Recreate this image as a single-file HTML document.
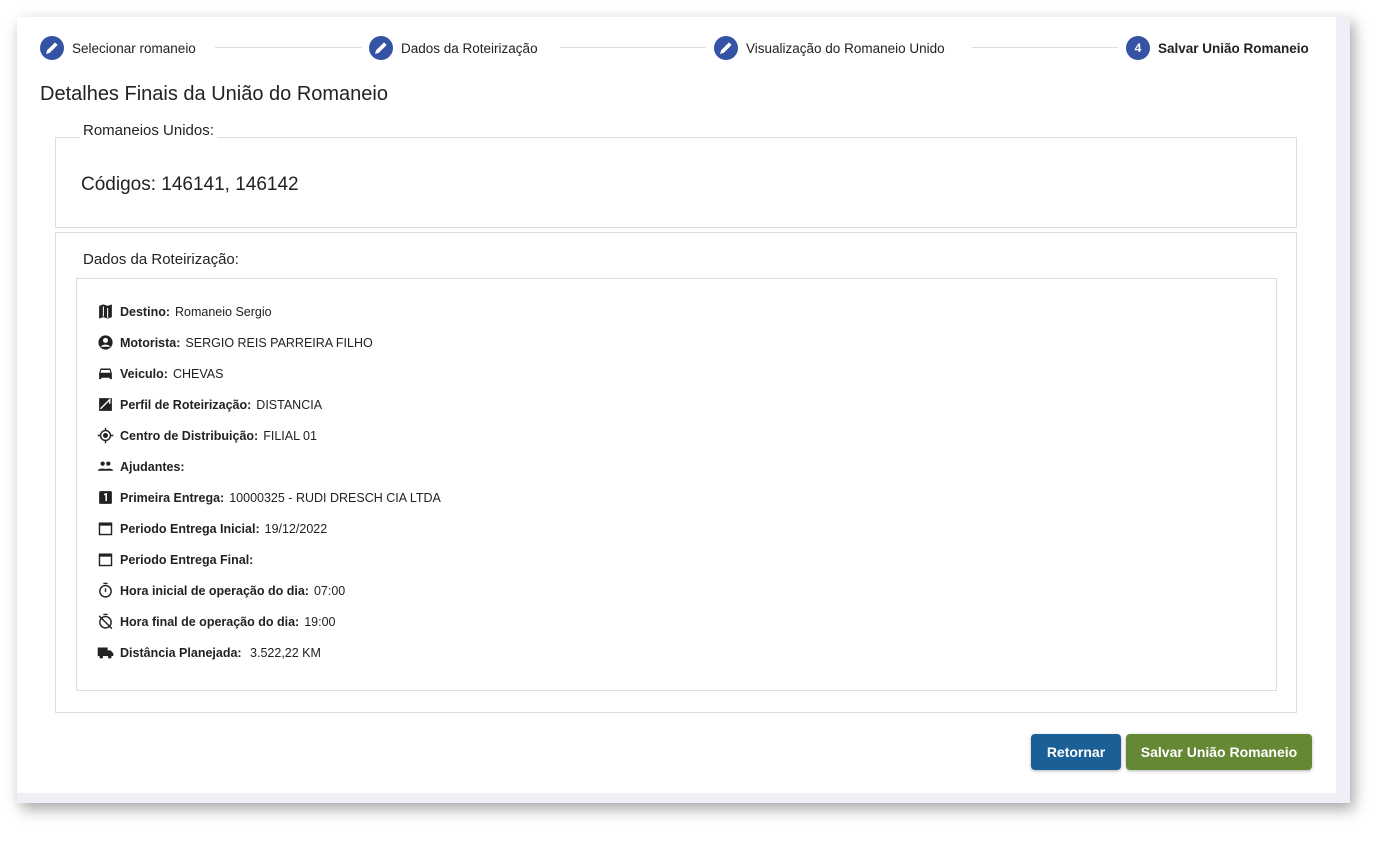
<!DOCTYPE html>
<html><head><meta charset="utf-8"><style>
body{margin:0;width:1398px;height:852px;background:#fff;font-family:"Liberation Sans",sans-serif;color:#222;position:relative;overflow:hidden}
.win{position:absolute;left:17px;top:17px;width:1333px;height:786px;background:#eef0f6;box-shadow:4px 6px 14px rgba(0,0,0,.35)}
.inner{position:absolute;left:0;top:0;width:1319px;height:776px;background:#fff}
.step{position:absolute;top:36px;display:flex;align-items:center;font-size:13.5px;color:#222}
.c{width:24px;height:24px;border-radius:50%;background:#3553a4;display:inline-flex;align-items:center;justify-content:center;color:#fff;font-size:12px;font-weight:bold;margin-right:8px}
.line{position:absolute;top:47px;height:1px;background:#ddd}
.box{position:absolute;border:1px solid #ddd;background:#fff}
.row{position:absolute;left:97px;font-size:12.5px;display:flex;align-items:center}
.row b{margin:0 5px 0 6px}
.ic{width:17px;height:17px;display:inline-block}
.btn{position:absolute;top:734px;height:36px;border-radius:4px;color:#fff;font-weight:bold;font-size:14px;display:flex;align-items:center;justify-content:center;box-shadow:0 1px 3px rgba(0,0,0,.3)}
</style></head><body>
<div class="win"><div class="inner"></div></div>
<svg width="0" height="0" style="position:absolute"><defs><symbol id="pen" viewBox="0 0 24 24"><path d="M4 20l1.5-5L16 4.5l3.5 3.5L9 18.5z" fill="#fff"/></symbol></defs></svg>
<div class="step" style="left:40px"><span class="c"><svg width="18" height="18"><use href="#pen"/></svg></span>Selecionar romaneio</div>
<div class="line" style="left:215px;width:147px"></div>
<div class="step" style="left:369px"><span class="c"><svg width="18" height="18"><use href="#pen"/></svg></span>Dados da Roteirização</div>
<div class="line" style="left:560px;width:146px"></div>
<div class="step" style="left:714px"><span class="c"><svg width="18" height="18"><use href="#pen"/></svg></span>Visualização do Romaneio Unido</div>
<div class="line" style="left:972px;width:146px"></div>
<div class="step" style="left:1126px;font-weight:bold"><span class="c">4</span>Salvar União Romaneio</div>
<div style="position:absolute;left:40px;top:83px;font-size:20px;color:#222">Detalhes Finais da União do Romaneio</div>
<div class="box" style="left:55px;top:137px;width:1240px;height:89px"></div>
<div style="position:absolute;left:80px;top:122px;background:#fff;padding:0 3px;font-size:15px">Romaneios Unidos:</div>
<div style="position:absolute;left:81px;top:174px;font-size:19px">Códigos: 146141, 146142</div>
<div class="box" style="left:55px;top:232px;width:1240px;height:479px"></div>
<div style="position:absolute;left:83px;top:251px;font-size:15px">Dados da Roteirização:</div>
<div class="box" style="left:76px;top:278px;width:1199px;height:411px"></div>
<div class="row" style="top:303px"><svg class="ic" viewBox="0 0 24 24"><path d="M3 4l6-2 6 2 6-2v18l-6 2-6-2-6 2z" fill="#222"/><path d="M9 5v14M15 7v14" stroke="#fff" stroke-width="1.5"/></svg><b>Destino:</b>Romaneio Sergio</div>
<div class="row" style="top:334px"><svg class="ic" viewBox="0 0 24 24"><circle cx="12" cy="12" r="10" fill="#222"/><circle cx="12" cy="9" r="3.5" fill="#fff"/><path d="M5 18c3-4 11-4 14 0" fill="#fff"/></svg><b>Motorista:</b>SERGIO REIS PARREIRA FILHO</div>
<div class="row" style="top:365px"><svg class="ic" viewBox="0 0 24 24"><path d="M5 5h14l2 7v8h-3v-2H6v2H3v-8z" fill="#222"/><path d="M6 7h12l1 4H5z" fill="#fff"/></svg><b>Veiculo:</b>CHEVAS</div>
<div class="row" style="top:396px"><svg class="ic" viewBox="0 0 24 24"><rect x="3" y="3" width="18" height="18" fill="#222"/><path d="M5 18L18 5v6" stroke="#fff" stroke-width="2" fill="none"/></svg><b>Perfil de Roteirização:</b>DISTANCIA</div>
<div class="row" style="top:427px"><svg class="ic" viewBox="0 0 24 24"><circle cx="12" cy="12" r="7" fill="none" stroke="#222" stroke-width="2"/><circle cx="12" cy="12" r="3.5" fill="#222"/><path d="M12 1v4M12 19v4M1 12h4M19 12h4" stroke="#222" stroke-width="2"/></svg><b>Centro de Distribuição:</b>FILIAL 01</div>
<div class="row" style="top:458px"><svg class="ic" viewBox="0 0 24 24"><circle cx="8" cy="8" r="3" fill="#222"/><circle cx="16" cy="8" r="3" fill="#222"/><path d="M1 18c0-4 14-4 14 0zM10 18c0-4 13-4 13 0z" fill="#222"/></svg><b>Ajudantes:</b></div>
<div class="row" style="top:489px"><svg class="ic" viewBox="0 0 24 24"><rect x="3" y="3" width="18" height="18" rx="2" fill="#222"/><path d="M10 8l3-1v10" stroke="#fff" stroke-width="2.2" fill="none"/></svg><b>Primeira Entrega:</b>10000325 - RUDI DRESCH CIA LTDA</div>
<div class="row" style="top:520px"><svg class="ic" viewBox="0 0 24 24"><rect x="3.5" y="4.5" width="17" height="16" fill="none" stroke="#222" stroke-width="2"/><rect x="3" y="4" width="18" height="4" fill="#222"/></svg><b>Periodo Entrega Inicial:</b>19/12/2022</div>
<div class="row" style="top:551px"><svg class="ic" viewBox="0 0 24 24"><rect x="3.5" y="4.5" width="17" height="16" fill="none" stroke="#222" stroke-width="2"/><rect x="3" y="4" width="18" height="4" fill="#222"/></svg><b>Periodo Entrega Final:</b></div>
<div class="row" style="top:582px"><svg class="ic" viewBox="0 0 24 24"><circle cx="12" cy="13" r="8" fill="none" stroke="#222" stroke-width="2"/><path d="M9 2h6M12 9v5" stroke="#222" stroke-width="2"/></svg><b>Hora inicial de operação do dia:</b>07:00</div>
<div class="row" style="top:613px"><svg class="ic" viewBox="0 0 24 24"><circle cx="12" cy="13" r="8" fill="none" stroke="#222" stroke-width="2"/><path d="M9 2h6M3 4l18 18" stroke="#222" stroke-width="2"/></svg><b>Hora final de operação do dia:</b>19:00</div>
<div class="row" style="top:644px"><svg class="ic" viewBox="0 0 24 24"><path d="M1 5h14v12H1zM15 9h4l4 4v4h-8z" fill="#222"/><circle cx="6" cy="18" r="2.5" fill="#222"/><circle cx="18" cy="18" r="2.5" fill="#222"/></svg><b>Distância Planejada:</b>&nbsp;3.522,22 KM</div>
<div class="btn" style="left:1031px;width:90px;background:#1a5f96">Retornar</div>
<div class="btn" style="left:1126px;width:186px;background:#658835">Salvar União Romaneio</div>
</body></html>
